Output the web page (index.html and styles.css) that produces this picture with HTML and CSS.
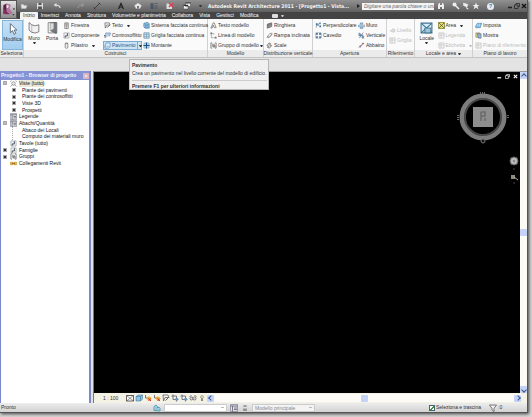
FILE: index.html
```html
<!DOCTYPE html>
<html lang="it">
<head>
<meta charset="utf-8">
<title>Autodesk Revit Architecture 2011</title>
<link rel="stylesheet" href="styles.css">
</head>
<body>
<svg class="defs">
<symbol id="door" viewBox="0 0 16 16"><path d="M4 2h8v13H4z" fill="#eee" stroke="#666" stroke-width="1.5"/><path d="M4 5h8M8 2v13M4 9h8" stroke="#666"/></symbol>
<symbol id="component" viewBox="0 0 16 16"><path d="M2 2h12v12H2z" fill="#eef0f3" stroke="#777"/><path d="M10 3v6H5v4" fill="none" stroke="#345" stroke-width="2"/></symbol>
<symbol id="column" viewBox="0 0 16 16"><path d="M5 3q3-2 6 0v10q-3 3-6 0zM5 3q3 2 6 0" fill="#eee" stroke="#666" stroke-width="1.5"/></symbol>
<symbol id="roof" viewBox="0 0 16 16"><path d="M2 2h10l2 5H6l-3 7z" fill="#f5f5f5" stroke="#555" stroke-width="1.5"/><path d="M7 13l6-6" stroke="#555" stroke-width="2"/></symbol>
<symbol id="ceiling" viewBox="0 0 16 16"><path d="M4 2h11l-2 7H6l-4 5z" fill="#9bbbe0" stroke="#47719d"/><path d="M4 5h9M4 8h8" stroke="#fff"/></symbol>
<symbol id="floor" viewBox="0 0 16 16"><path d="M2 9l3-7h9v8l-3 4H2z" fill="#dcebf7" stroke="#5587b5" stroke-width="1.5"/><path d="M2 10h10" stroke="#5587b5"/></symbol>
<symbol id="curtain" viewBox="0 0 16 16"><path d="M2 3l9-2 3 3v10H5l-3-3z" fill="#a8d1ea" stroke="#2f6d9e" stroke-width="1.5"/><path d="M5 5h9M5 9h9M9 5v9M5 5v9" stroke="#2f6d9e"/></symbol>
<symbol id="grid" viewBox="0 0 16 16"><path d="M2 2h12v12H2z" fill="#e3eef6" stroke="#44799f" stroke-width="1.5"/><path d="M8 2v12M2 6h12M2 10h12" stroke="#44799f"/></symbol>
<symbol id="mullion" viewBox="0 0 16 16"><path d="M2 2h12v12H2z" fill="#b9d4e8" stroke="#6b8cad"/><path d="M8 1v14M1 8h14" stroke="#1d5485" stroke-width="2.5"/></symbol>
<symbol id="text" viewBox="0 0 16 16"><path d="M2 14L7 2h3l4 11h-4l-1-3H6l-1 4zM6 8h3" fill="#eee" stroke="#555" stroke-width="1.3"/></symbol>
<symbol id="line" viewBox="0 0 16 16"><path d="M3 2v11M3 3l8 2M4 13h9" fill="none" stroke="#666" stroke-width="1.4" stroke-dasharray="3 1"/><path d="M1 1h4v4H1zM11 11h4v4h-4z" fill="#777"/></symbol>
<symbol id="group" viewBox="0 0 16 16"><path d="M5 2H2v12h3M11 2h3v12h-3" fill="none" stroke="#555" stroke-width="1.5"/><path d="M5 5h5v5H5zM8 8h4v4H8z" fill="#ccc" stroke="#555"/></symbol>
<symbol id="rail" viewBox="0 0 16 16"><path d="M3 5l10-3v8L3 14z" fill="#bbb" stroke="#444" stroke-width="1.5"/><path d="M3 8l10-3M6 4v9M9 3v9" stroke="#444"/></symbol>
<symbol id="ramp" viewBox="0 0 16 16"><path d="M2 12L9 3h5l-1 4-6 6zM3 11h5l5-6" fill="#eee" stroke="#666" stroke-width="1.2"/></symbol>
<symbol id="stair" viewBox="0 0 16 16"><path d="M2 8l5-6 4 2-3 3 5 1-5 6-5-2 3-2z" fill="#ddd" stroke="#444" stroke-width="1.3"/></symbol>
<symbol id="perp" viewBox="0 0 16 16"><path d="M3 13V8h5V4h5" fill="none" stroke="#567b9f" stroke-width="1.5"/><path d="M2 3h4v4H2zM10 8h4v4h-4zM10 1h3v3h-3z" fill="#426f9b"/></symbol>
<symbol id="shaft" viewBox="0 0 16 16"><path d="M2 2h12v12H2z" fill="#b7c7da" stroke="#355a84"/><path d="M8 2v12M2 8h12" stroke="#fff" stroke-width="2"/><path d="M3 3h3v3H3zM10 3h3v3h-3zM3 10h3v3H3zM10 10h3v3h-3z" fill="#355a84"/></symbol>
<symbol id="wallop" viewBox="0 0 16 16"><path d="M1 7h14v4H1z" fill="#c1dced" stroke="#456e94"/><path d="M5 2h6v3H5zM5 12h6v3H5z" fill="#aecbdd" stroke="#456e94"/></symbol>
<symbol id="vert" viewBox="0 0 16 16"><path d="M2 2v7h5V5zM9 6v8h4V9z" fill="#8eb2cf" stroke="#355f8b"/><path d="M3 14L12 1" stroke="#333"/></symbol>
<symbol id="dormer" viewBox="0 0 16 16"><path d="M2 13l4-6 2 2 2-6h4" fill="none" stroke="#a44b55" stroke-width="1.5"/><path d="M4 11h3M10 4h3" stroke="#447" stroke-width="2"/></symbol>
<symbol id="level" viewBox="0 0 16 16"><path d="M2 9h5" stroke="#bbb" stroke-width="2"/><circle cx="10" cy="8" r="4" fill="#ddd" stroke="#bbb"/></symbol>
<symbol id="faint" viewBox="0 0 16 16"><path d="M2 2h12v12H2zM2 7h12M7 2v12" fill="#f3f3f3" stroke="#bdbdbd" stroke-width="1.4"/></symbol>
<symbol id="area" viewBox="0 0 16 16"><path d="M1 1h14v14H1z" fill="#e6dd65" stroke="#62611d" stroke-width="1.5"/><path d="M2 2l12 12M14 2L2 14" stroke="#333" stroke-width="1.4"/></symbol>
<symbol id="plane" viewBox="0 0 16 16"><path d="M1 11l4-8h10l-3 10H2z" fill="#75b2dc" stroke="#27628f"/><path d="M4 7h9M6 3l-1 9M10 3v9" stroke="#e5f1f8"/></symbol>
<symbol id="show" viewBox="0 0 16 16"><path d="M2 2h9v10H2z" fill="#e8d48b" stroke="#555"/><path d="M5 4h9v10H8z" fill="#8eb6d8" stroke="#445"/></symbol>
<symbol id="sheet" viewBox="0 0 16 16"><path d="M1 1h14v14H1z" fill="#e1e3e8" stroke="#556"/><path d="M1 4h14M5 4v11M8 8h6M8 11h6" stroke="#556" stroke-width="1.5"/></symbol>
<symbol id="views" viewBox="0 0 16 16"><circle cx="8" cy="8" r="4" fill="#eee" stroke="#666" stroke-width="1.3"/><path d="M1 4l2-3M13 1l2 3M1 15l4-4M15 15l-4-4" stroke="#666" stroke-width="1.3"/></symbol>
<symbol id="link" viewBox="0 0 16 16"><path d="M1 5h6v6H1zM9 5h6v6H9z" fill="#e5b33f" stroke="#ad7711"/><path d="M5 8h6" stroke="#8c6413" stroke-width="2"/></symbol>
<symbol id="open" viewBox="0 0 16 16"><path d="M2 5h5l1 2h6l-2 6H3z" fill="#e5e5e5" stroke="#bbb"/></symbol>
<symbol id="save" viewBox="0 0 16 16"><path d="M2 2h12v12H2z" fill="#ddd"/><path d="M5 2h6v4H5zM4 9h8v5H4z" fill="#555"/></symbol>
<symbol id="undo" viewBox="0 0 16 16"><path d="M14 12q0-6-9-6" fill="none" stroke="#ddd" stroke-width="2.5"/><path d="M1 6l6-4v8z" fill="#ddd"/></symbol>
<symbol id="redo" viewBox="0 0 16 16"><path d="M2 12q0-6 9-6" fill="none" stroke="#999" stroke-width="2"/><path d="M15 6L9 2v8z" fill="#999"/></symbol>
<symbol id="measure" viewBox="0 0 16 16"><path d="M2 14L14 2M1 11l4 4M11 1l4 4" stroke="#333" stroke-width="1.7"/></symbol>
<symbol id="letter" viewBox="0 0 16 16"><path d="M3 14L8 3l5 11M5 10h6" fill="none" stroke="#222" stroke-width="2.4"/></symbol>
<symbol id="house" viewBox="0 0 16 16"><path d="M1 7l7-5 7 5-3 6H4z" fill="#e8e8e8" stroke="#bbb"/><path d="M6 8h4v5H6z" fill="#777"/></symbol>
<symbol id="thin" viewBox="0 0 16 16"><path d="M1 4h6M1 8h6M1 12h6" stroke="#26395a" stroke-width="2"/><path d="M9 3h6M9 8h6M9 12h6" stroke="#26395a"/></symbol>
<symbol id="closeview" viewBox="0 0 16 16"><path d="M1 3h11v11H1z" fill="#ddd"/><path d="M6 2l8 8M14 2l-8 8" stroke="#d33f50" stroke-width="3"/></symbol>
<symbol id="switch" viewBox="0 0 16 16"><path d="M5 1h10v8H5zM1 6h9v8H1z" fill="#eee" stroke="#444"/><path d="M1 7h9M5 2h10" stroke="#333" stroke-width="2"/></symbol>
<symbol id="bino" viewBox="0 0 16 16"><path d="M2 14V6l2-4h2v4h4V2h2l2 4v8h-4v-4H6v4z" fill="#eee"/></symbol>
<symbol id="key" viewBox="0 0 16 16"><path d="M3 3l11 11" stroke="#eee" stroke-width="3"/><circle cx="5" cy="5" r="4" fill="#eee"/></symbol>
<symbol id="comm" viewBox="0 0 16 16"><path d="M3 2l9 3-2 5-7-3zM8 9l2 5h3" fill="#eee" stroke="#eee"/></symbol>
<symbol id="star" viewBox="0 0 16 16"><path d="M8 1l2 5h5l-4 3 2 6-5-4-5 4 2-6-4-3h5z" fill="#eee"/></symbol>
<symbol id="cube" viewBox="0 0 16 16"><path d="M2 5l4-3h9v8l-4 4H2z" fill="#8cc5e6" stroke="#316a94"/><path d="M2 5h9v9M11 5l4-3" fill="none" stroke="#316a94"/></symbol>
<symbol id="sun" viewBox="0 0 16 16"><path d="M3 2v6h5" fill="none" stroke="#777" stroke-width="2"/><circle cx="10" cy="9" r="4" fill="#f0a43a"/><path d="M9 9l5 5M14 9l-5 5" stroke="#c6402d" stroke-width="2"/></symbol>
<symbol id="crop" viewBox="0 0 16 16"><path d="M4 1v10h11M1 4h10v11" fill="none" stroke="#626b7a" stroke-width="1.8"/><path d="M9 8h5v5H9z" fill="#6a9ac0"/></symbol>
<symbol id="glasses" viewBox="0 0 16 16"><path d="M1 5l4-2M15 5l-4-2" stroke="#555" stroke-width="1.5"/><circle cx="5" cy="9" r="3" fill="#ddd" stroke="#555" stroke-width="1.5"/><circle cx="11" cy="9" r="3" fill="#ddd" stroke="#555" stroke-width="1.5"/></symbol>
<symbol id="bulb" viewBox="0 0 16 16"><circle cx="8" cy="6" r="3" fill="#dce9a0" stroke="#777"/><path d="M8 9v5" stroke="#666" stroke-width="3"/></symbol>
<symbol id="mail" viewBox="0 0 16 16"><path d="M1 3h14v11H1z" fill="#fff" stroke="#333" stroke-width="1.5"/><path d="M1 3l14 11M15 3L1 14" stroke="#333"/></symbol>
<symbol id="filter" viewBox="0 0 16 16"><path d="M1 2h14l-5 7v6l-4-3V9z" fill="#eee" stroke="#555" stroke-width="1.5"/></symbol>
<symbol id="workset" viewBox="0 0 16 16"><path d="M2 13V5l4-3 3 3v3l3-2 2 3v5z" fill="#b5dfea" stroke="#328ba3" stroke-width="1.5"/><path d="M6 5v8M10 9v4" stroke="#328ba3"/></symbol>
</svg>

<div class="window">
<header class="top">
	<button class="app" aria-label="Menu applicazione">
		<svg viewBox="0 0 32 34"><path d="M5 8l7-4v20l-7 3z" fill="#5b1f48"/><path d="M12 4l9 3-3 8 7 9-5 3-8-8z" fill="#b6739d"/><path d="M12 7l5 2-2 5-3-1z" fill="#f6e7f0"/><path d="M5 14l14 13H8z" fill="#842d63"/><path d="M25 15h5l-2.500 3z" fill="#222"/><path d="M24 27h5l-2.500 3z" fill="#222"/></svg>
	</button>
	<div class="bars">
		<div class="titlebar">
			<div class="quick">
				<svg><use href="#open"/></svg><svg><use href="#save"/></svg><svg class="wide"><use href="#undo"/></svg><svg><use href="#redo"/></svg><svg class="wide"><use href="#measure"/></svg><svg><use href="#letter"/></svg><svg><use href="#house"/></svg><svg><use href="#thin"/></svg><svg><use href="#closeview"/></svg><svg><use href="#switch"/></svg><i class="arrow"></i>
			</div>
			<h1>Autodesk Revit Architecture 2011 - [Progetto1 - Vista...</h1>
			<div class="find">
				<i class="play"></i>
				<input type="text" aria-label="Cerca" placeholder="Digitare una parola chiave o una frase">
				<svg><use href="#bino"/></svg><svg><use href="#key"/></svg><svg><use href="#comm"/></svg><svg><use href="#star"/></svg>
				<button class="help">?</button>
			</div>
			<div class="winbtns">
				<button aria-label="Riduci"><svg viewBox="0 0 12 12"><path d="M2 9h8" stroke="#222" stroke-width="3"/></svg></button>
				<button aria-label="Ripristina"><svg viewBox="0 0 12 12"><path d="M4 4V1h7v6H8M1 4h7v7H1z" fill="none" stroke="#222" stroke-width="1.5"/></svg></button>
				<button aria-label="Chiudi"><svg viewBox="0 0 12 12"><path d="M2 2l8 8M10 2l-8 8" stroke="#111" stroke-width="2.5"/></svg></button>
			</div>
		</div>
		<nav class="tabs">
			<a href="#" class="on">Inizio</a><a href="#">Inserisci</a><a href="#">Annota</a><a href="#">Struttura</a><a href="#">Volumetrie e planimetria</a><a href="#">Collabora</a><a href="#">Vista</a><a href="#">Gestisci</a><a href="#">Modifica</a>
			<button class="mini" aria-label="Riduci barra"></button>
			<i class="arrow"></i>
		</nav>
	</div>
</header>

<div class="ribbon">
	<section class="panel seleziona">
		<div class="tools"><button class="big active"><svg viewBox="0 0 24 24"><path d="M8 2v17l4-4 3 7 3-2-3-6h5z" fill="#fff" stroke="#456" stroke-width="1.5"/></svg>Modifica</button></div>
		<h2>Seleziona</h2>
	</section>
	<section class="panel costruisci">
		<div class="tools">
			<button class="big"><svg viewBox="0 0 24 24"><path d="M2 2l5 4q6 4 13 0v13q-7 4-13 1l-5-4z" fill="#f2f2f2" stroke="#666" stroke-width="1.5"/><path d="M7 6v14" stroke="#888"/></svg>Muro<i class="arrow"></i></button>
			<button class="big"><svg viewBox="0 0 24 24"><path d="M4 2h16v19H4z" fill="#f5f5f5" stroke="#777" stroke-width="1.5"/><path d="M8 3l11-1v20L8 17z" fill="#777b80" stroke="#444"/><path d="M8 3h6v10l-6 4z" fill="#ddd"/></svg>Porta</button>
			<div class="col">
				<button><svg><use href="#door"/></svg>Finestra</button>
				<button><svg><use href="#component"/></svg>Componente<i class="arrow"></i></button>
				<button><svg><use href="#column"/></svg>Pilastro<i class="arrow"></i></button>
			</div>
			<div class="col">
				<button><svg><use href="#roof"/></svg>Tetto<i class="arrow"></i></button>
				<button><svg><use href="#ceiling"/></svg>Controsoffitto</button>
				<button class="hot"><svg><use href="#floor"/></svg>Pavimento<span><i class="arrow"></i></span></button>
			</div>
			<div class="col">
				<button><svg><use href="#curtain"/></svg>Sistema facciata continua</button>
				<button><svg><use href="#grid"/></svg>Griglia facciata continua</button>
				<button><svg><use href="#mullion"/></svg>Montante</button>
			</div>
		</div>
		<h2>Costruisci</h2>
	</section>
	<section class="panel modello">
		<div class="tools"><div class="col">
			<button><svg><use href="#text"/></svg>Testo modello</button>
			<button><svg><use href="#line"/></svg>Linea di modello</button>
			<button><svg><use href="#group"/></svg>Gruppo di modello<i class="arrow"></i></button>
		</div></div>
		<h2>Modello</h2>
	</section>
	<section class="panel distribuzione">
		<div class="tools"><div class="col">
			<button><svg><use href="#rail"/></svg>Ringhiera</button>
			<button><svg><use href="#ramp"/></svg>Rampa inclinata</button>
			<button><svg><use href="#stair"/></svg>Scale</button>
		</div></div>
		<h2>Distribuzione verticale</h2>
	</section>
	<section class="panel apertura">
		<div class="tools">
			<div class="col">
				<button><svg><use href="#perp"/></svg>Perpendicolare</button>
				<button><svg><use href="#shaft"/></svg>Cavedio</button>
			</div>
			<div class="col">
				<button><svg><use href="#wallop"/></svg>Muro</button>
				<button><svg><use href="#vert"/></svg>Verticale</button>
				<button><svg><use href="#dormer"/></svg>Abbaino</button>
			</div>
		</div>
		<h2>Apertura</h2>
	</section>
	<section class="panel riferimento">
		<div class="tools"><div class="col two">
			<button disabled><svg><use href="#level"/></svg>Livello</button>
			<button disabled><svg><use href="#faint"/></svg>Griglia</button>
		</div></div>
		<h2>Riferimento</h2>
	</section>
	<section class="panel locale">
		<div class="tools">
			<button class="big"><svg viewBox="0 0 24 24"><path d="M2 3h20v18H2z" fill="#d9ebf5" stroke="#467290" stroke-width="2"/><path d="M2 3l20 18M22 3L2 21" stroke="#35789f" stroke-width="2"/><path d="M9 12h11v9H9z" fill="#9fc5d9" stroke="#356984" stroke-width="1.500"/></svg>Locale<i class="arrow"></i></button>
			<div class="col">
				<button><svg><use href="#area"/></svg>Area<i class="arrow"></i></button>
				<button disabled><svg><use href="#faint"/></svg>Legenda</button>
				<button disabled><svg><use href="#faint"/></svg>Etichetta<i class="arrow"></i></button>
			</div>
		</div>
		<h2>Locale e area<i class="arrow"></i></h2>
	</section>
	<section class="panel piano">
		<div class="tools"><div class="col">
			<button><svg><use href="#plane"/></svg>Imposta</button>
			<button><svg><use href="#show"/></svg>Mostra</button>
			<button disabled><svg><use href="#faint"/></svg>Piano di riferimento</button>
		</div></div>
		<h2>Piano di lavoro</h2>
	</section>
	<div class="tooltip" role="tooltip">
		<b>Pavimento</b>
		<p>Crea un pavimento nel livello corrente del modello di edificio.</p>
		<b class="f1">Premere F1 per ulteriori informazioni</b>
	</div>
</div>

<div class="work">
	<aside class="browser">
		<h2>Progetto1 - Browser di progetto<button aria-label="Chiudi">×</button></h2>
		<ul class="tree">
			<li><i class="box minus"></i><svg><use href="#views"/></svg><span class="sel">Viste (tutto)</span></li>
			<li class="sub"><i class="box"></i>Piante dei pavimenti</li>
			<li class="sub"><i class="box"></i>Piante dei controsoffitti</li>
			<li class="sub"><i class="box"></i>Viste 3D</li>
			<li class="sub"><i class="box"></i>Prospetti</li>
			<li><i></i><svg><use href="#sheet"/></svg>Legende</li>
			<li><i class="box minus"></i><svg><use href="#sheet"/></svg>Abachi/Quantità</li>
			<li class="sub"><i class="branch"></i>Abaco dei Locali</li>
			<li class="sub"><i class="branch"></i>Computo dei materiali muro</li>
			<li><i></i><svg><use href="#component"/></svg>Tavole (tutto)</li>
			<li><i class="box"></i><svg><use href="#component"/></svg>Famiglie</li>
			<li><i class="box"></i><svg><use href="#group"/></svg>Gruppi</li>
			<li><i></i><svg><use href="#link"/></svg>Collegamenti Revit</li>
		</ul>
	</aside>
	<main class="view">
		<div class="canvas">
			<div class="viewbtns">
				<svg viewBox="0 0 12 12"><path d="M1 9h9" stroke="#fff" stroke-width="3"/></svg>
				<svg viewBox="0 0 12 12"><path d="M4 4V1h7v6H8M1 4h7v7H1z" fill="none" stroke="#fff" stroke-width="1.600"/></svg>
				<svg viewBox="0 0 12 12"><path d="M2 2l8 8M10 2l-8 8" stroke="#fff" stroke-width="2.500"/></svg>
			</div>
			<svg class="compass" viewBox="0 0 52 54">
				<circle cx="26" cy="26" r="21" fill="none" stroke="#7c7c7c" stroke-width="5"/>
				<circle cx="26" cy="26" r="18" fill="none" stroke="#484848" stroke-width="2"/>
				<path d="M16 16h20v20H16z" fill="#8d8d8d"/>
				<path d="M24 21v9M24 21h4v4h-4M28 30v-3" fill="none" stroke="#6b6b6b" stroke-width="1.500"/>
				<path d="M23 2h6M1 24v5M51 24v4" stroke="#666" stroke-width="2" stroke-dasharray="1 1"/>
				<circle cx="26" cy="50" r="2" fill="#111" stroke="#777"/>
			</svg>
			<svg class="wheel" viewBox="0 0 10 30">
				<circle cx="5" cy="7" r="4" fill="#aaa" stroke="#666"/><circle cx="5" cy="7" r="2" fill="#888" stroke="#ccc"/>
				<path d="M2 21h4v4H2z" fill="#8b8b7b"/><path d="M5 23l4 3" stroke="#aaa"/><path d="M4 15h2M4 29h2" stroke="#444"/>
			</svg>
		</div>
		<div class="scroll v"><i class="up"></i><i class="thumb"></i><i class="down"></i></div>
		<div class="viewbar">
			<span class="scale">1 : 100</span>
			<svg><use href="#mail"/></svg><svg><use href="#cube"/></svg><svg><use href="#sun"/></svg><svg><use href="#sun"/></svg><svg><use href="#roof"/></svg><svg><use href="#crop"/></svg><svg><use href="#crop"/></svg><svg><use href="#glasses"/></svg><svg><use href="#bulb"/></svg>
			<div class="scroll h"><i class="left"></i><i class="thumb"></i><i class="right"></i></div>
		</div>
	</main>
</div>

<footer class="status">
	<span class="ready">Pronto</span>
	<svg><use href="#workset"/></svg>
	<select aria-label="Workset"><option></option></select>
	<svg class="a"><use href="#sheet"/></svg>
	<svg class="b"><use href="#save"/></svg>
	<select aria-label="Opzioni" disabled><option>Modello principale</option></select>
	<label><input type="checkbox" checked>Seleziona e trascina</label>
	<svg><use href="#filter"/></svg><span>:0</span>
</footer>
</div>
</body>
</html>
```
FILE: styles.css
```css
* {
	box-sizing: border-box;
}

body {
	margin: 0;
	height: 100vh;
	padding: 0 4px 4px 0;
	background: #d4d4d4;
	font: 5px/7px "Liberation Sans", Arial, sans-serif;
	color: #333;
	overflow: hidden;
}

.defs {
	display: none;
}

h1, h2, p, ul {
	margin: 0;
	padding: 0;
	font-size: 5px;
	font-weight: normal;
}

button, input, select {
	font: inherit;
	color: inherit;
	margin: 0;
	padding: 0;
	border: 0;
	background: none;
	appearance: none;
}

svg {
	width: 8px;
	height: 8px;
	flex: none;
}

.window {
	display: flex;
	flex-direction: column;
	height: 100%;
	border-right: 1px solid #555;
	border-bottom: 1px solid #555;
	box-shadow: 1px 1px 3px #444;
}

.arrow {
	border: 1px solid transparent;
	border-top: 2px solid #333;
	border-bottom: 0;
	width: 3px;
	height: 2px;
}

/* title bar and tabs */
.top {
	display: flex;
	height: 19px;
	background: #4b4b4b;
}

.app {
	width: 17px;
	height: 19px;
	background: linear-gradient(#e4e4e4, #8c8c8c);
	border: 1px solid #555;
}

.app svg {
	display: block;
	width: 15px;
	height: 17px;
}

.bars {
	flex: 1;
	min-width: 0;
}

.titlebar {
	display: flex;
	align-items: center;
	height: 12px;
	background: linear-gradient(#919191, #606060);
}

.quick {
	display: flex;
	align-items: center;
	justify-content: space-between;
	width: 185px;
	padding-left: 3px;
}

.quick svg {
	margin-right: 4px;
}

.quick .wide {
	margin-right: 12px;
}

.titlebar h1 {
	flex: 1;
	padding-left: 6px;
	font-family: "DejaVu Sans Condensed", "DejaVu Sans", sans-serif;
	font-weight: bold;
	color: #f2f2f2;
	white-space: nowrap;
}

.find {
	display: flex;
	align-items: center;
	gap: 2px;
}

.find input {
	width: 72px;
	height: 7px;
	margin-right: 1px;
	padding-left: 2px;
	background: #f4f4f4;
	font-style: italic;
}

.find input::placeholder {
	color: #666;
}

.find svg:nth-of-type(1) {
	margin-right: 5px;
}

.play {
	border: 2px solid transparent;
	border-left: 3px solid #222;
	border-right: 0;
}

.help {
	width: 7px;
	height: 7px;
	margin: 0 13px 0 5px;
	border-radius: 50%;
	background: #e6edf5;
	color: #335c8f;
	font-weight: bold;
	text-align: center;
}

.winbtns {
	display: flex;
	gap: 1px;
}

.winbtns button {
	height: 6px;
}

.winbtns svg {
	display: block;
	width: 6px;
	height: 6px;
}

.tabs {
	display: flex;
	align-items: center;
	height: 7px;
	padding-left: 3px;
	background: #444;
}

.tabs a {
	padding: 0 3px;
	color: #fff;
	text-decoration: none;
	white-space: nowrap;
}

.tabs .on {
	background: #f3f3f3;
	color: #333;
	border-radius: 1px 1px 0 0;
}

.mini {
	width: 6px;
	height: 4px;
	margin: 0 3px 0 10px;
	border-radius: 1px;
	background: #ddd;
}

.tabs .arrow {
	border-top-color: #ccc;
}

/* ribbon */
.ribbon {
	position: relative;
	display: flex;
	height: 39px;
	background: #fafafa;
	border-bottom: 1px solid #c4c4c4;
}

.panel {
	display: flex;
	flex-direction: column;
	flex: none;
	border-right: 1px solid #d0d0d0;
}

.tools {
	display: flex;
	flex: 1;
}

.panel h2 {
	display: flex;
	align-items: center;
	justify-content: center;
	gap: 2px;
	height: 7px;
	background: #ebebeb;
	white-space: nowrap;
}

.seleziona { width: 24px; }
.costruisci { width: 184px; }
.modello { width: 56px; }
.distribuzione { width: 49px; }
.apertura { width: 74px; }
.riferimento { width: 28px; }
.locale { width: 58px; }
.piano { flex: 1; border-right: 0; }

.big {
	display: flex;
	flex-direction: column;
	align-items: center;
	width: 18px;
	padding-top: 2px;
}

.big svg {
	width: 13px;
	height: 14px;
}

.big.active {
	width: 21px;
	margin: 1px 0 0 2px;
	padding-top: 1px;
	border: 1px solid #86b5da;
	background: linear-gradient(#c6e0f5, #a3cdef);
}

.costruisci .tools {
	padding-left: 1px;
}

.locale .tools {
	padding-left: 3px;
}

.col {
	display: flex;
	flex-direction: column;
	gap: 1px;
	padding: 2px 0 0 2px;
}

.costruisci .col {
	flex: none;
	width: 41px;
}

.costruisci .col:nth-of-type(2) {
	width: 39px;
}

.apertura .col {
	width: 43px;
}

.col.two {
	padding: 7px 0 0 2px;
}

.col button {
	display: flex;
	align-items: center;
	gap: 1px;
	height: 9px;
	white-space: nowrap;
}

.col svg {
	width: 7px;
	height: 7px;
}

.col .arrow {
	margin-left: 3px;
}

.modello .arrow {
	margin-left: 0;
}

.col button:disabled {
	color: #bbb;
}

.col button:disabled .arrow {
	border-top-color: #bbb;
}

.col .hot {
	width: 39px;
	margin-left: -1px;
	border: 1px solid #7eabd0;
	background: #cde4f5;
	color: #235b91;
}

.hot span {
	display: flex;
	align-items: center;
	height: 7px;
	margin-left: auto;
	border-left: 1px solid #7eabd0;
}

.hot span .arrow {
	margin: 0 1px;
}

.tooltip {
	position: absolute;
	left: 129px;
	top: 40px;
	height: 31px;
	padding: 2px 1px 2px 2px;
	border: 1px solid #b5b5b5;
	background: #f0f0f0;
	white-space: nowrap;
	z-index: 2;
}

.tooltip b {
	display: block;
}

.tooltip p {
	padding: 1px 0 3px;
}

.tooltip .f1 {
	padding-top: 2px;
	border-top: 1px solid #ccc;
}

/* work area */
.work {
	display: flex;
	flex: 1;
	min-height: 0;
	padding-top: 13px;
	background: #e3e3e3;
}

.browser {
	width: 91px;
	border: solid #7d87cc;
	border-width: 0 2px 0 1px;
	background: #fff;
}

.browser h2 {
	display: flex;
	align-items: center;
	height: 9px;
	background: #8592d6;
	color: #f4f4ff;
	font-weight: bold;
	white-space: nowrap;
}

.browser h2 button {
	width: 6px;
	height: 6px;
	margin-left: auto;
	background: #d9b4bd;
	line-height: 6px;
	font-weight: bold;
}

.tree {
	display: grid;
	grid-auto-rows: 1fr;
	height: 87px;
	list-style: none;
	color: #111;
}

.tree li {
	display: flex;
	align-items: center;
	gap: 2px;
	padding-left: 2px;
	min-height: 0;
	white-space: nowrap;
}

.tree svg {
	width: 7px;
	height: 7px;
}

.tree i {
	width: 4px;
	height: 4px;
	margin-right: 1px;
}

.tree .sub {
	padding-left: 11px;
}

.tree .sub i {
	margin-right: 4px;
}

.tree .box {
	border: 1px solid #aaa;
	background: #333;
}

.tree .minus {
	background: #bbb;
}

.tree .branch {
	border-left: 1px dotted #aaa;
	height: 7px;
}

.sel {
	background: #ece9d8;
}

.view {
	display: grid;
	grid-template: 1fr 10px / 1fr 7px;
	flex: 1;
	min-width: 0;
	margin-left: 2px;
	border-top: 1px solid #999;
	border-left: 1px solid #777;
}

.canvas {
	position: relative;
	background: #000;
}

.viewbtns {
	display: flex;
	justify-content: flex-end;
	gap: 3px;
	padding: 2px;
}

.viewbtns svg {
	width: 5px;
	height: 5px;
}

.compass {
	position: absolute;
	top: 19px;
	right: 11px;
	width: 52px;
	height: 54px;
}

.wheel {
	position: absolute;
	top: 82px;
	right: 1px;
	width: 10px;
	height: 30px;
}

.scroll {
	display: flex;
	justify-content: space-between;
	background: #fcfbf5;
}

.scroll.v {
	flex-direction: column;
}

.scroll i {
	display: grid;
	place-items: center;
	width: 7px;
	height: 7px;
	border-radius: 1px;
	background: #c4d3f7;
}

.up::before, .down::before, .left::before, .right::before {
	content: "";
	width: 3px;
	height: 3px;
	border: solid #3d5688;
	border-width: 1px 0 0 1px;
	transform: rotate(45deg);
}

.down::before { transform: rotate(225deg); }
.left::before { transform: rotate(-45deg); }
.right::before { transform: rotate(135deg); }

.viewbar {
	grid-column: 1 / 3;
	display: flex;
	align-items: center;
	gap: 1px;
	padding-right: 6px;
	background: #f4f1e5;
}

.scale {
	width: 31px;
	padding-left: 9px;
}

.scroll.h {
	flex: 1;
	align-items: center;
	height: 8px;
}

/* status bar */
.status {
	display: flex;
	align-items: center;
	height: 9px;
	padding-left: 1px;
	background: linear-gradient(#ededed, #d2d2d2);
	white-space: nowrap;
}

.ready {
	width: 152px;
}

.status select {
	width: 63px;
	height: 8px;
	margin-left: 3px;
	padding-left: 2px;
	border: 1px solid #ccc;
	background: linear-gradient(#bbb, #bbb) right 2px center / 3px 1px no-repeat #fff;
	line-height: 6px;
}

.status select:disabled {
	color: #888;
	background-color: #f3f3f3;
	opacity: 1;
}

.status .a {
	margin-left: 3px;
}

.status .b {
	margin-left: 3px;
	opacity: .5;
}

.status label {
	display: flex;
	align-items: center;
	gap: 1px;
	margin: 0 8px 0 auto;
}

.status input {
	width: 6px;
	height: 6px;
	border: 1px solid #467;
	background: linear-gradient(135deg, #fff 40%, #3a9a3a 40%, #3a9a3a 65%, #fff 65%);
}

.status span:last-child {
	width: 30px;
	padding-left: 1px;
}
```
